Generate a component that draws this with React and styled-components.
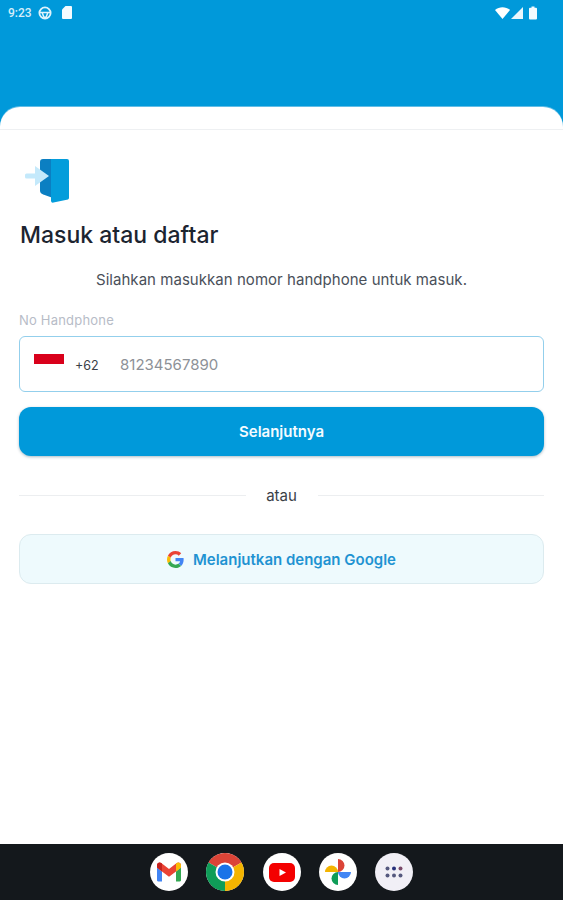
import React from 'react';
import styled, { createGlobalStyle } from 'styled-components';

const Global = createGlobalStyle`
  html, body { margin: 0; padding: 0; background: #fff; }
  * { box-sizing: border-box; }
  body { font-family: "Inter", "Noto Sans", sans-serif; }
`;

const GlobeIcon = () => (
  <svg width="14" height="14" viewBox="0 0 13 13">
    <circle cx="6.500" cy="6.500" r="5.200" fill="none" stroke="#dff3fc" strokeWidth="1.700" />
    <path d="M1.500 6h10M4 6.500l1.500 4h2l1.500-4" fill="none" stroke="#dff3fc" strokeWidth="1.400" />
  </svg>
);

const SimIcon = () => (
  <svg width="10" height="13" viewBox="0 0 10 13">
    <path d="M3.500 0H9a1 1 0 0 1 1 1v11a1 1 0 0 1-1 1H1a1 1 0 0 1-1-1V3.500z" fill="#f3fbff" />
  </svg>
);

const WifiIcon = () => (
  <svg width="15" height="12" viewBox="0 0 14 11">
    <path d="M0 2.600C4-.8 10-.8 14 2.600L7 11z" fill="#fff" />
  </svg>
);

const SignalIcon = () => (
  <svg width="12" height="12" viewBox="0 0 11 11">
    <path d="M11 0v11H0z" fill="#e9f7fd" />
  </svg>
);

const BatteryIcon = () => (
  <svg width="8" height="14" viewBox="0 0 8 13">
    <path d="M2.500 0h3v1.200H7a1 1 0 0 1 1 1V12a1 1 0 0 1-1 1H1a1 1 0 0 1-1-1V2.200a1 1 0 0 1 1-1h1.500z" fill="#f3fbff" />
  </svg>
);

const LoginIcon = () => (
  <svg width="46" height="46" viewBox="0 0 46 46">
    <path d="M19 1h10v39l-7-2.500c-3-1-6-2-6-5V4a3 3 0 0 1 3-3z" fill="#0b7fc2" />
    <path d="M27 1h16a2 2 0 0 1 2 2v37a1.500 1.500 0 0 1-1 1.400L29.500 44.600A2 2 0 0 1 27 43z" fill="#049ddb" />
    <path d="M11 8l14 10-14 10z" fill="#c4e9fb" />
    <rect x="1" y="15.500" width="13" height="5" rx="1.500" fill="#c4e9fb" />
  </svg>
);

const GoogleIcon = () => (
  <svg width="17" height="17" viewBox="0 0 48 48">
    <path fill="#EA4335" d="M24 9.500c3.540 0 6.710 1.220 9.210 3.600l6.850-6.850C35.900 2.380 30.470 0 24 0 14.620 0 6.510 5.380 2.560 13.220l7.980 6.190C12.430 13.720 17.740 9.500 24 9.500z" />
    <path fill="#4285F4" d="M46.980 24.550c0-1.570-.15-3.090-.38-4.550H24v9.020h12.940c-.58 2.960-2.260 5.480-4.780 7.180l7.730 6c4.510-4.180 7.090-10.360 7.090-17.650z" />
    <path fill="#FBBC05" d="M10.530 28.590c-.48-1.450-.76-2.990-.76-4.590s.27-3.140.76-4.590l-7.980-6.190C.92 16.460 0 20.120 0 24c0 3.880.92 7.540 2.560 10.780l7.970-6.190z" />
    <path fill="#34A853" d="M24 48c6.480 0 11.930-2.130 15.890-5.810l-7.730-6c-2.150 1.450-4.920 2.300-8.160 2.300-6.260 0-11.570-4.220-13.470-9.910l-7.980 6.190C6.510 42.620 14.620 48 24 48z" />
  </svg>
);

const GmailIcon = () => (
  <svg width="26" height="20" viewBox="0 0 26 20">
    <path d="M1 18.500V5.500L6 9.500v10H2.500A1.500 1.500 0 0 1 1 18.500z" fill="#4285F4" />
    <path d="M20 19.500v-10l5-4v13a1.500 1.500 0 0 1-1.500 1z" fill="#34A853" />
    <path d="M1 5.500V3.200C1 1 3.500-.2 5.300 1.100L13 7l7.700-5.900C22.500-.2 25 1 25 3.200v2.300l-5 4-7 5.300-7-5.300z" fill="#EA4335" />
    <path d="M20 9.500l5-4V3.200C25 1 22.500-.2 20.700 1.100L20 1.700z" fill="#FBBC05" />
    <path d="M1 5.500l5 4V1.700l-.7-.6C3.500-.2 1 1 1 3.200z" fill="#C5221F" />
  </svg>
);

const ChromeIcon = () => (
  <svg width="38" height="38" viewBox="0 0 38 38">
    <path d="M19 19L2.550 9.500A19 19 0 0 1 35.450 9.500z" fill="#DB4437" />
    <path d="M19 19L2.550 9.500A19 19 0 0 0 19 38z" fill="#0F9D58" />
    <path d="M19 19L35.450 9.500A19 19 0 0 1 19 38z" fill="#F4B400" />
    <circle cx="19" cy="19" r="9.500" fill="#fff" />
    <circle cx="19" cy="19" r="7.500" fill="#1A73E8" />
  </svg>
);

const YoutubeIcon = () => (
  <svg width="26" height="19" viewBox="0 0 26 19">
    <rect width="26" height="19" rx="5" fill="#f40000" />
    <path d="M10.500 6l6.500 3.500-6.500 3.500z" fill="#fff" />
  </svg>
);

const PhotosIcon = () => (
  <svg width="28" height="28" viewBox="0 0 28 28">
    <path d="M14 14V1a6.500 6.500 0 0 1 0 13z" fill="#DB4437" />
    <path d="M14 14h13a6.500 6.500 0 0 1-13 0z" fill="#4285F4" />
    <path d="M14 14v13a6.500 6.500 0 0 1 0-13z" fill="#0F9D58" />
    <path d="M14 14H1a6.500 6.500 0 0 1 13 0z" fill="#F4B400" />
  </svg>
);

const AppsIcon = () => (
  <svg width="18" height="12" viewBox="0 0 18 12">
    {[2.500, 9, 15.500].map((x) => [2.500, 9.500].map((y) => (
      <circle key={`${x}-${y}`} cx={x} cy={y} r="2" fill={x === 9 && y === 2.500 ? '#27307a' : x === 15.500 && y === 2.500 ? '#7a4a6a' : '#55587e'} />
    )))}
  </svg>
);

const App = () => {
  return (
    <Page>
      <Global />
      <Header>
        <StatusBar>
          <StatusGroup>
            <Clock>9:23</Clock>
            <GlobeIcon />
            <SimSlot><SimIcon /></SimSlot>
          </StatusGroup>
          <StatusRight>
            <WifiIcon />
            <SignalIcon />
            <BatterySlot><BatteryIcon /></BatterySlot>
          </StatusRight>
        </StatusBar>
      </Header>
      <Sheet>
        <SheetTop />
        <Content>
          <IconWrap><LoginIcon /></IconWrap>
          <Title>Masuk atau daftar</Title>
          <Subtitle>Silahkan masukkan nomor handphone untuk masuk.</Subtitle>
          <FieldLabel>No Handphone</FieldLabel>
          <PhoneField>
            <Flag><FlagRed /></Flag>
            <DialCode>+62</DialCode>
            <PhoneNumber>81234567890</PhoneNumber>
          </PhoneField>
          <PrimaryButton>Selanjutnya</PrimaryButton>
          <Divider>
            <DividerLine />
            <DividerText>atau</DividerText>
            <DividerLine />
          </Divider>
          <GoogleButton>
            <GoogleIcon />
            Melanjutkan dengan Google
          </GoogleButton>
        </Content>
      </Sheet>
      <Dock>
        <DockItem><GmailIcon /></DockItem>
        <DockItem><ChromeIcon /></DockItem>
        <DockItem><YoutubeIcon /></DockItem>
        <DockItem><PhotosIcon /></DockItem>
        <DockItem $muted><AppsIcon /></DockItem>
      </Dock>
    </Page>
  );
};

export default App;

const Page = styled.div`
  width: 563px;
  height: 900px;
  display: flex;
  flex-direction: column;
  overflow: hidden;
  background: #0099da;
`;

const Header = styled.div`
  height: 107px;
  flex-shrink: 0;
  background: #0099da;
`;

const StatusBar = styled.div`
  height: 25px;
  padding: 0 26px 0 8px;
  display: flex;
  align-items: center;
  justify-content: space-between;
`;

const StatusGroup = styled.div`
  display: flex;
  align-items: center;
  gap: 6px;
`;

const StatusRight = styled.div`
  display: flex;
  align-items: center;
  gap: 1px;
`;

const Clock = styled.span`
  font-family: Roboto, sans-serif;
  font-size: 12px;
  font-weight: 500;
  color: #d5eefa;
`;

const SimSlot = styled.span`
  display: flex;
  margin-left: 4px;
`;

const BatterySlot = styled.span`
  display: flex;
  margin-left: 5px;
`;

const Sheet = styled.div`
  flex: 1;
  display: flex;
  flex-direction: column;
  background: #fff;
  border-radius: 20px 20px 0 0;
  box-shadow: 0 -1px 0 #62bde6;
`;

const SheetTop = styled.div`
  height: 23px;
  flex-shrink: 0;
  border-bottom: 1px solid #eef0f2;
`;

const Content = styled.div`
  padding: 28px 19px 0;
  display: flex;
  flex-direction: column;
`;

const IconWrap = styled.div`
  height: 46px;
  padding-left: 5px;
`;

const Title = styled.h1`
  margin: 16px 0 0 1px;
  font-size: 23px;
  line-height: 30px;
  font-weight: 500;
  color: #1c2430;
`;

const Subtitle = styled.p`
  margin: 20px 0 0;
  font-size: 15px;
  line-height: 20px;
  letter-spacing: 0.04px;
  text-align: center;
  color: #4a5059;
`;

const FieldLabel = styled.label`
  margin-top: 21px;
  font-size: 13px;
  line-height: 18px;
  letter-spacing: 0.2px;
  color: #b7bcc7;
`;

const PhoneField = styled.div`
  margin-top: 7px;
  height: 56px;
  display: flex;
  align-items: center;
  padding-left: 14px;
  background: #fff;
  border: 1.5px solid #93cfec;
  border-radius: 6px;
`;

const Flag = styled.div`
  width: 30px;
  height: 20px;
  background: #fff;
`;

const FlagRed = styled.div`
  height: 10px;
  background: #d9001b;
`;

const DialCode = styled.span`
  margin-left: 11px;
  margin-top: 2px;
  width: 45px;
  font-size: 12.500px;
  color: #3a3f47;
`;

const PhoneNumber = styled.span`
  font-size: 15px;
  color: #8d9197;
`;

const PrimaryButton = styled.button`
  margin-top: 15px;
  height: 49px;
  border: none;
  border-radius: 12px;
  background: #0099da;
  box-shadow: 0 1px 3px rgba(0, 60, 90, 0.35);
  color: #f4fbff;
  font-family: inherit;
  font-size: 15px;
  font-weight: 600;
`;

const Divider = styled.div`
  margin-top: 29px;
  height: 20px;
  display: flex;
  align-items: center;
`;

const DividerLine = styled.div`
  flex: 1;
  height: 1px;
  background: #eceef0;
`;

const DividerText = styled.span`
  width: 72px;
  text-align: center;
  font-size: 15px;
  color: #3a3f47;
`;

const GoogleButton = styled.button`
  margin-top: 29px;
  height: 50px;
  display: flex;
  align-items: center;
  justify-content: center;
  gap: 9px;
  background: #eefafd;
  border: 1px solid #dcebef;
  border-radius: 12px;
  color: #1f93d2;
  font-family: inherit;
  font-size: 15px;
  font-weight: 600;
`;

const Dock = styled.div`
  height: 56px;
  flex-shrink: 0;
  background: #14181c;
  display: flex;
  align-items: center;
  justify-content: center;
  gap: 18.250px;
`;

const DockItem = styled.div`
  width: 38px;
  height: 38px;
  border-radius: 50%;
  display: flex;
  align-items: center;
  justify-content: center;
  background: ${(p) => (p.$muted ? '#f1eff6' : '#fff')};
`;
